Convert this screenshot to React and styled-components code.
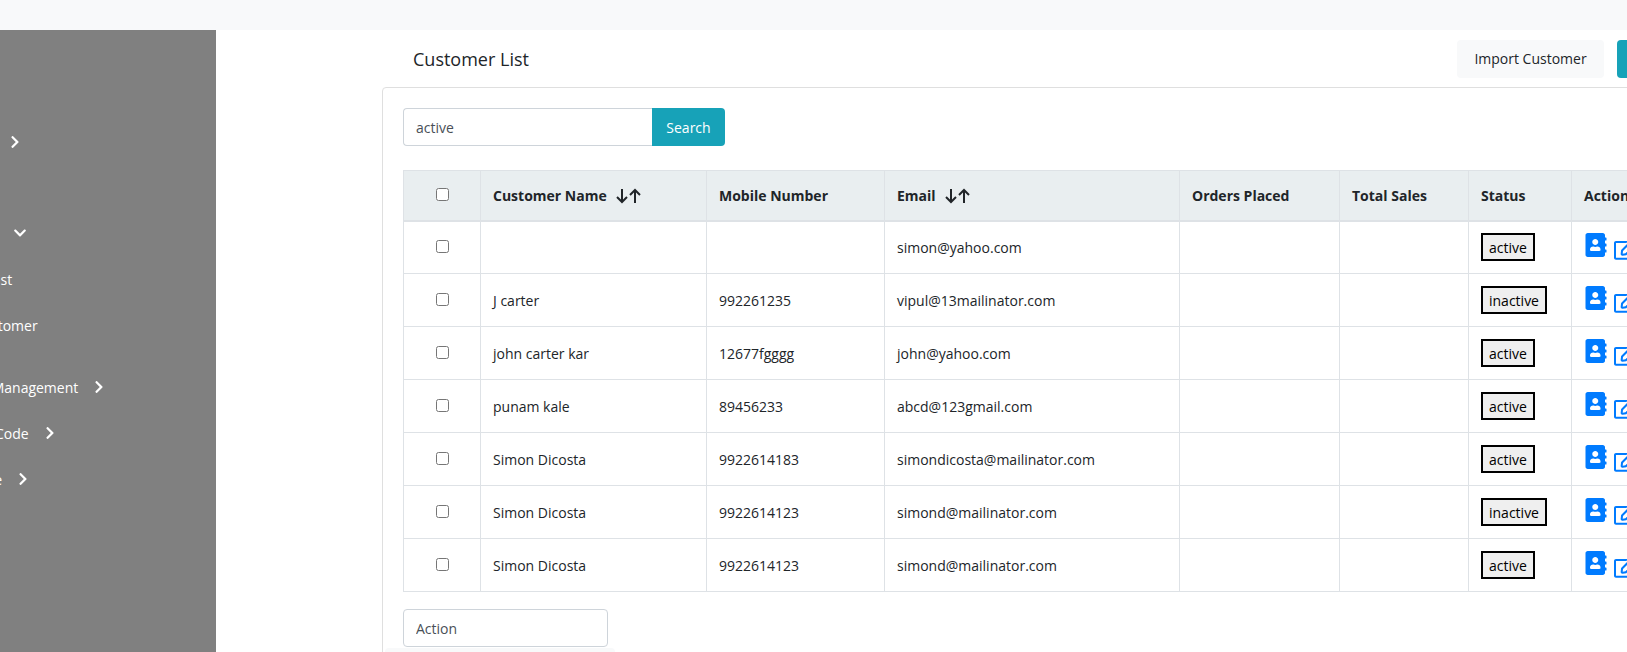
import React from 'react'
import styled, { createGlobalStyle } from 'styled-components'
import { FaAddressBook, FaRegEdit, FaChevronRight, FaChevronDown } from 'react-icons/fa'

const GlobalStyle = createGlobalStyle`
  html, body {
    margin: 0;
    padding: 0;
    background: #fff;
    overflow: hidden;
  }
  body {
    font-family: "Open Sans", "Noto Sans", "Liberation Sans", sans-serif;
    font-size: 14px;
    color: #212529;
  }
  * {
    box-sizing: border-box;
  }
`

const Page = styled.div`
  width: 1627px;
  height: 652px;
  overflow: hidden;
`
const TopBar = styled.div`
  height: 30px;
  background: #f8f9fa;
`
const Body = styled.div`
  display: flex;
  height: 622px;
`
const Sidebar = styled.nav`
  flex: 0 0 216px;
  background: #808080;
  color: #fff;
  overflow: hidden;
  padding-top: 89px;
`
const NavRow = styled.div`
  display: flex;
  align-items: center;
  height: 46px;
  margin-left: ${({ shift }) => shift}px;
  margin-top: ${({ top }) => top || 0}px;
  white-space: nowrap;
  svg {
    margin-left: ${({ gap }) => gap || 14}px;
    font-size: 14px;
  }
`
const Main = styled.main`
  flex: 0 0 1400px;
  padding-left: 166px;
`
const TitleRow = styled.div`
  display: flex;
  align-items: center;
  height: 57px;
  padding-left: 31px;
`
const Title = styled.h1`
  margin: 0;
  font-size: 18px;
  font-weight: 400;
  flex: 0 0 1044px;
`
const Button = styled.button`
  height: 38px;
  padding: 0 14px;
  border: 0;
  border-radius: 4px;
  font: inherit;
  white-space: nowrap;
  color: ${({ primary }) => (primary ? '#fff' : '#212529')};
  background: ${({ primary }) => (primary ? '#17a2b8' : '#f8f9fa')};
`
const ImportButton = styled(Button)`
  width: 147px;
  margin-right: 13px;
  flex: none;
`
const Card = styled.section`
  width: 1400px;
  height: 600px;
  padding: 20px;
  border: 1px solid #dfdfdf;
  border-radius: 4px 0 0 0;
`
const SearchForm = styled.div`
  display: flex;
  height: 38px;
  margin-bottom: 24px;
`
const SearchInput = styled.input`
  width: 249px;
  height: 38px;
  padding: 0 12px;
  border: 1px solid #ced4da;
  border-right: 0;
  border-radius: 4px 0 0 4px;
  font: inherit;
  color: #495057;
`
const SearchButton = styled(Button)`
  width: 73px;
  padding: 0;
  border-radius: 0 4px 4px 0;
`
const Table = styled.table`
  width: 1300px;
  table-layout: fixed;
  border-collapse: collapse;
`
const Th = styled.th`
  height: 50px;
  padding: 0 12px;
  text-align: ${({ center }) => (center ? 'center' : 'left')};
  font-weight: 700;
  background: #e9eef0;
  border: 1px solid #dee2e6;
  border-bottom-width: 2px;
  white-space: nowrap;
`
const Td = styled.td`
  height: 53px;
  padding: 0 12px;
  text-align: ${({ center }) => (center ? 'center' : 'left')};
  border: 1px solid #dee2e6;
  white-space: nowrap;
`
const Check = styled.input.attrs({ type: 'checkbox' })`
  width: 13px;
  height: 13px;
  margin: 0;
`
const SortArrows = styled.svg`
  width: 28px;
  height: 16px;
  margin-left: 8px;
  vertical-align: -3px;
`
const StatusChip = styled.button`
  height: 28px;
  padding: 0 6px;
  border: 2px solid #000;
  border-radius: 0;
  background: #efefef;
  color: #000;
  font: inherit;
`
const ActionIcons = styled.div`
  display: flex;
  color: #007bff;
  font-size: 24px;
  svg:last-child {
    margin-left: 6px;
    margin-top: 4px;
  }
`
const ActionSelect = styled.input`
  display: block;
  width: 205px;
  height: 38px;
  margin-top: 17px;
  padding: 0 12px;
  border: 1px solid #ced4da;
  border-radius: 4px;
  font: inherit;
  color: #495057;
`
const Footnote = styled.div`
  width: 230px;
  height: 8px;
  margin: 1px 0 0 -18px;
  background: #f8f9fa;
  border-radius: 4px 4px 0 0;
`

const customers = [
  { name: '', mobile: '', email: 'simon@yahoo.com', status: 'active' },
  { name: 'J carter', mobile: '992261235', email: 'vipul@13mailinator.com', status: 'inactive' },
  { name: 'john carter kar', mobile: '12677fgggg', email: 'john@yahoo.com', status: 'active' },
  { name: 'punam kale', mobile: '89456233', email: 'abcd@123gmail.com', status: 'active' },
  { name: 'Simon Dicosta', mobile: '9922614183', email: 'simondicosta@mailinator.com', status: 'active' },
  { name: 'Simon Dicosta', mobile: '9922614123', email: 'simond@mailinator.com', status: 'inactive' },
  { name: 'Simon Dicosta', mobile: '9922614123', email: 'simond@mailinator.com', status: 'active' }
]

const columns = [77, 226, 178, 295, 160, 129, 103, 132]

function Sort() {
  return (
    <SortArrows viewBox="0 0 28 16" fill="none" stroke="#212529" strokeWidth="2">
      <path d="M7 1v13M2 9l5 5 5-5" />
      <path d="M20 15V2M15 7l5-5 5 5" />
    </SortArrows>
  )
}

export default function App() {
  return (
    <Page>
      <GlobalStyle />
      <TopBar />
      <Body>
        <Sidebar>
          <NavRow shift={-78}>Dashboard<FaChevronRight /></NavRow>
          <NavRow shift={-72} top={45}>Customers<FaChevronDown /></NavRow>
          <NavRow shift={-78}>Customer List</NavRow>
          <NavRow shift={-56}>Add Customer</NavRow>
          <NavRow shift={-76} top={16}>Customer Management<FaChevronRight /></NavRow>
          <NavRow shift={-60}>Coupon Code<FaChevronRight /></NavRow>
          <NavRow shift={-50}>Manage<FaChevronRight /></NavRow>
          <NavRow shift={-50}>Logout</NavRow>
        </Sidebar>
        <Main>
          <TitleRow>
            <Title>Customer List</Title>
            <ImportButton>Import Customer</ImportButton>
            <Button primary>Add Customer</Button>
          </TitleRow>
          <Card>
            <SearchForm>
              <SearchInput defaultValue="active" />
              <SearchButton primary>Search</SearchButton>
            </SearchForm>
            <Table>
              <colgroup>
                {columns.map((w, i) => <col key={i} width={w} />)}
              </colgroup>
              <thead>
                <tr>
                  <Th center><Check /></Th>
                  <Th>Customer Name<Sort /></Th>
                  <Th>Mobile Number</Th>
                  <Th>Email<Sort /></Th>
                  <Th>Orders Placed</Th>
                  <Th>Total Sales</Th>
                  <Th>Status</Th>
                  <Th>Action</Th>
                </tr>
              </thead>
              <tbody>
                {customers.map((c, i) => (
                  <tr key={i}>
                    <Td center><Check /></Td>
                    <Td>{c.name}</Td>
                    <Td>{c.mobile}</Td>
                    <Td>{c.email}</Td>
                    <Td />
                    <Td />
                    <Td><StatusChip>{c.status}</StatusChip></Td>
                    <Td>
                      <ActionIcons>
                        <FaAddressBook />
                        <FaRegEdit />
                      </ActionIcons>
                    </Td>
                  </tr>
                ))}
              </tbody>
            </Table>
            <ActionSelect defaultValue="Action" />
            <Footnote />
          </Card>
        </Main>
      </Body>
    </Page>
  )
}
